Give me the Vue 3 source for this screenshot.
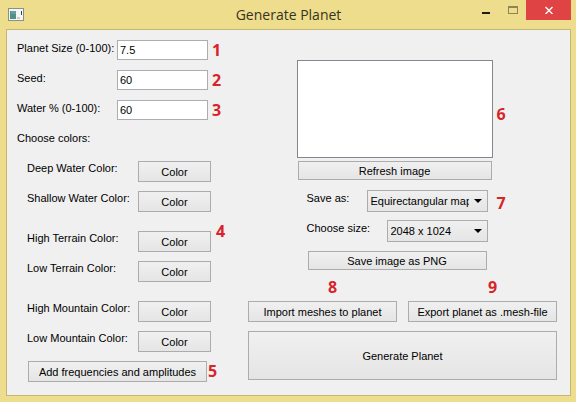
<script setup>
import { ref, reactive } from 'vue'

const fields = reactive([
  { id: 'size', label: 'Planet Size (0-100):', value: '7.5', mark: 1 },
  { id: 'seed', label: 'Seed:', value: '60', mark: 2 },
  { id: 'water', label: 'Water % (0-100):', value: '60', mark: 3 },
])

const colorGroups = [
  { mark: null, items: ['Deep Water Color:', 'Shallow Water Color:'] },
  { mark: 4, items: ['High Terrain Color:', 'Low Terrain Color:'] },
  { mark: null, items: ['High Mountain Color:', 'Low Mountain Color:'] },
]

const format = ref('Equirectangular map')
const size = ref('2048 x 1024')
</script>

<template>
  <div class="window">
    <header class="titlebar">
      <svg class="app-icon" width="16" height="14" viewBox="0 0 16 14" aria-hidden="true">
        <rect x="0" y="0" width="16" height="13" fill="#8d9088" />
        <rect x="1" y="1" width="14" height="11" fill="#f4f6f4" />
        <rect x="2" y="3" width="6" height="8" fill="#4f9187" />
        <rect x="3" y="3" width="5" height="3" fill="#6a9fa0" />
        <rect x="9" y="9" width="3" height="2" fill="#c9cdca" />
        <rect x="13" y="3" width="1" height="4" fill="#2f4a44" />
      </svg>
      <h1 class="title">Generate Planet</h1>
      <div class="controls">
        <button class="control" type="button" aria-label="Minimize">
          <svg width="8" height="14" viewBox="0 0 8 14"><rect y="12" width="8" height="2" fill="#1f1c10" /></svg>
        </button>
        <button class="control" type="button" aria-label="Maximize">
          <svg width="10" height="14" viewBox="0 0 10 14">
            <path d="M0 6H10V14H0ZM1 8V13H9V8Z" fill="#8f8550" fill-rule="evenodd" />
          </svg>
        </button>
        <button class="control close" type="button" aria-label="Close">
          <svg width="8" height="14" viewBox="0 0 8 14">
            <path d="M0.5 7L7.5 14M7.5 7L0.5 14" stroke="#fff" stroke-width="1.4" />
          </svg>
        </button>
      </div>
    </header>

    <main class="panel">
      <section class="settings">
        <div v-for="f in fields" :key="f.id" class="field">
          <label :for="f.id">{{ f.label }}</label>
          <input :id="f.id" v-model="f.value" type="text" />
          <span class="mark">{{ f.mark }}</span>
        </div>

        <p class="caption">Choose colors:</p>

        <div class="colors">
          <div v-for="(group, g) in colorGroups" :key="g" class="color-group">
            <div v-for="(item, i) in group.items" :key="item" class="color-row">
              <span :id="`color-${g}-${i}`" class="color-label">{{ item }}</span>
              <button class="btn" type="button" :aria-describedby="`color-${g}-${i}`">Color</button>
              <span v-if="group.mark && i === 0" class="mark">{{ group.mark }}</span>
            </div>
          </div>
        </div>

        <div class="frequencies">
          <button class="btn" type="button">Add frequencies and amplitudes</button>
          <span class="mark">5</span>
        </div>
      </section>

      <section class="output">
        <div class="preview-area">
          <div class="preview" role="img" aria-label="Planet preview"></div>
          <span class="mark preview-mark">6</span>
          <button class="btn low refresh" type="button">Refresh image</button>
          <div class="choice">
            <label for="format">Save as:</label>
            <span class="select wide">
              <select id="format" v-model="format">
                <option>Equirectangular map</option>
              </select>
            </span>
          </div>
          <span class="mark">7</span>
          <div class="choice">
            <label for="dimensions">Choose size:</label>
            <span class="select">
              <select id="dimensions" v-model="size">
                <option>2048 x 1024</option>
              </select>
            </span>
          </div>
          <button class="btn low save" type="button">Save image as PNG</button>
        </div>

        <div class="actions">
          <div class="action">
            <span class="mark">8</span>
            <button class="btn" type="button">Import meshes to planet</button>
          </div>
          <div class="action">
            <span class="mark">9</span>
            <button class="btn" type="button">Export planet as .mesh-file</button>
          </div>
          <button class="btn generate" type="button">Generate Planet</button>
        </div>
      </section>
    </main>
  </div>
</template>

<style>
body {
  margin: 0;
  background: #eedd8c;
}
</style>

<style scoped>
.window,
.window * {
  box-sizing: border-box;
}

.window {
  display: flex;
  flex-direction: column;
  min-height: 100vh;
  padding: 0 5px 6px 6px;
  background: #eedd8c;
  color: #000;
  font: 11px/16px "Liberation Sans", Arial, sans-serif;
}

.titlebar {
  display: grid;
  grid-template-columns: 1fr auto 1fr;
  align-items: center;
  height: 29px;
}

.app-icon {
  display: block;
  margin-left: 2px;
}

.title {
  margin: 0;
  color: #37331f;
  font: 400 14px/20px "Open Sans", "Noto Sans", sans-serif;
}

.controls {
  display: flex;
  justify-self: end;
  align-self: start;
}

.control {
  display: flex;
  justify-content: center;
  width: 27px;
  height: 20px;
  padding: 0;
  border: 0;
  background: transparent;
}

.close {
  width: 45px;
  background: #e04343;
}

.panel {
  display: grid;
  grid-template-columns: 221px 1fr;
  column-gap: 10px;
  flex: 1;
  padding: 10px 13px 13px 10px;
  border: 1px solid #c4b673;
  background: #f0f0f0;
}

.mark {
  color: #d8232a;
  font: 700 16px/20px "Open Sans", "Noto Sans", sans-serif;
}

.field {
  display: flex;
  margin-bottom: 10px;
}

.field label {
  width: 100px;
  white-space: nowrap;
}

input {
  width: 91px;
  height: 20px;
  margin: 0 4px 0 0;
  padding: 0 2px;
  border: 1px solid #abadb3;
  border-radius: 0;
  background: #fff;
  color: inherit;
  font: inherit;
}

.caption {
  margin: 0;
}

.colors {
  display: grid;
  gap: 19px;
  padding: 15px 0 0 10px;
}

.color-group {
  display: grid;
  gap: 9px;
}

.color-row {
  display: flex;
  height: 21px;
}

.color-label {
  width: 111px;
  line-height: 14px;
  white-space: nowrap;
}

.color-row .btn {
  width: 73px;
}

.color-row .mark {
  margin-left: 5px;
  line-height: 1px;
}

.btn {
  height: 21px;
  padding: 0;
  border: 1px solid #acacac;
  border-radius: 0;
  background: linear-gradient(#f0f0f0, #e5e5e5);
  color: inherit;
  font: inherit;
  white-space: nowrap;
}

.low {
  height: 19px;
}

.frequencies {
  display: flex;
  gap: 1px;
  padding: 9px 0 0 11px;
}

.frequencies .btn {
  width: 179px;
}

.output {
  display: flex;
  flex-direction: column;
  padding-top: 20px;
}

.preview-area {
  display: grid;
  grid-template-columns: 196px 12px;
  column-gap: 4px;
  align-items: center;
  justify-content: center;
}

.preview {
  height: 98px;
  border: 1px solid #828790;
  background: #fff;
}

.preview-mark {
  padding-top: 10px;
}

.refresh {
  grid-column: 1;
  margin: 3px 1px 10px;
}

.choice {
  grid-column: 1;
  display: flex;
  justify-content: space-between;
  margin: 0 5px 8px 10px;
}

.choice + .mark {
  padding-bottom: 4px;
}

.choice + .btn {
  margin-top: 1px;
}

.select {
  position: relative;
  width: 101px;
}

.wide {
  width: 121px;
}

.select::after {
  content: "";
  position: absolute;
  top: 9px;
  right: 6px;
  border: 4px solid transparent;
  border-top-color: #000;
  border-bottom: 0;
  pointer-events: none;
}

select {
  appearance: none;
  display: block;
  width: 100%;
  height: 22px;
  margin: 0;
  padding: 0 18px 0 3px;
  border: 1px solid #acacac;
  border-radius: 0;
  background: linear-gradient(#f0f0f0, #e5e5e5);
  color: inherit;
  font: inherit;
}

.save {
  grid-column: 1;
  margin: 0 6px 0 11px;
}

.actions {
  display: grid;
  grid-template-columns: 1fr 1fr;
  gap: 9px 11px;
  padding-top: 7px;
}

.action {
  display: flex;
  flex-direction: column;
  gap: 4px;
  text-align: center;
}

.action .mark {
  padding-left: 20px;
}

.generate {
  grid-column: 1 / -1;
  height: 49px;
}
</style>
